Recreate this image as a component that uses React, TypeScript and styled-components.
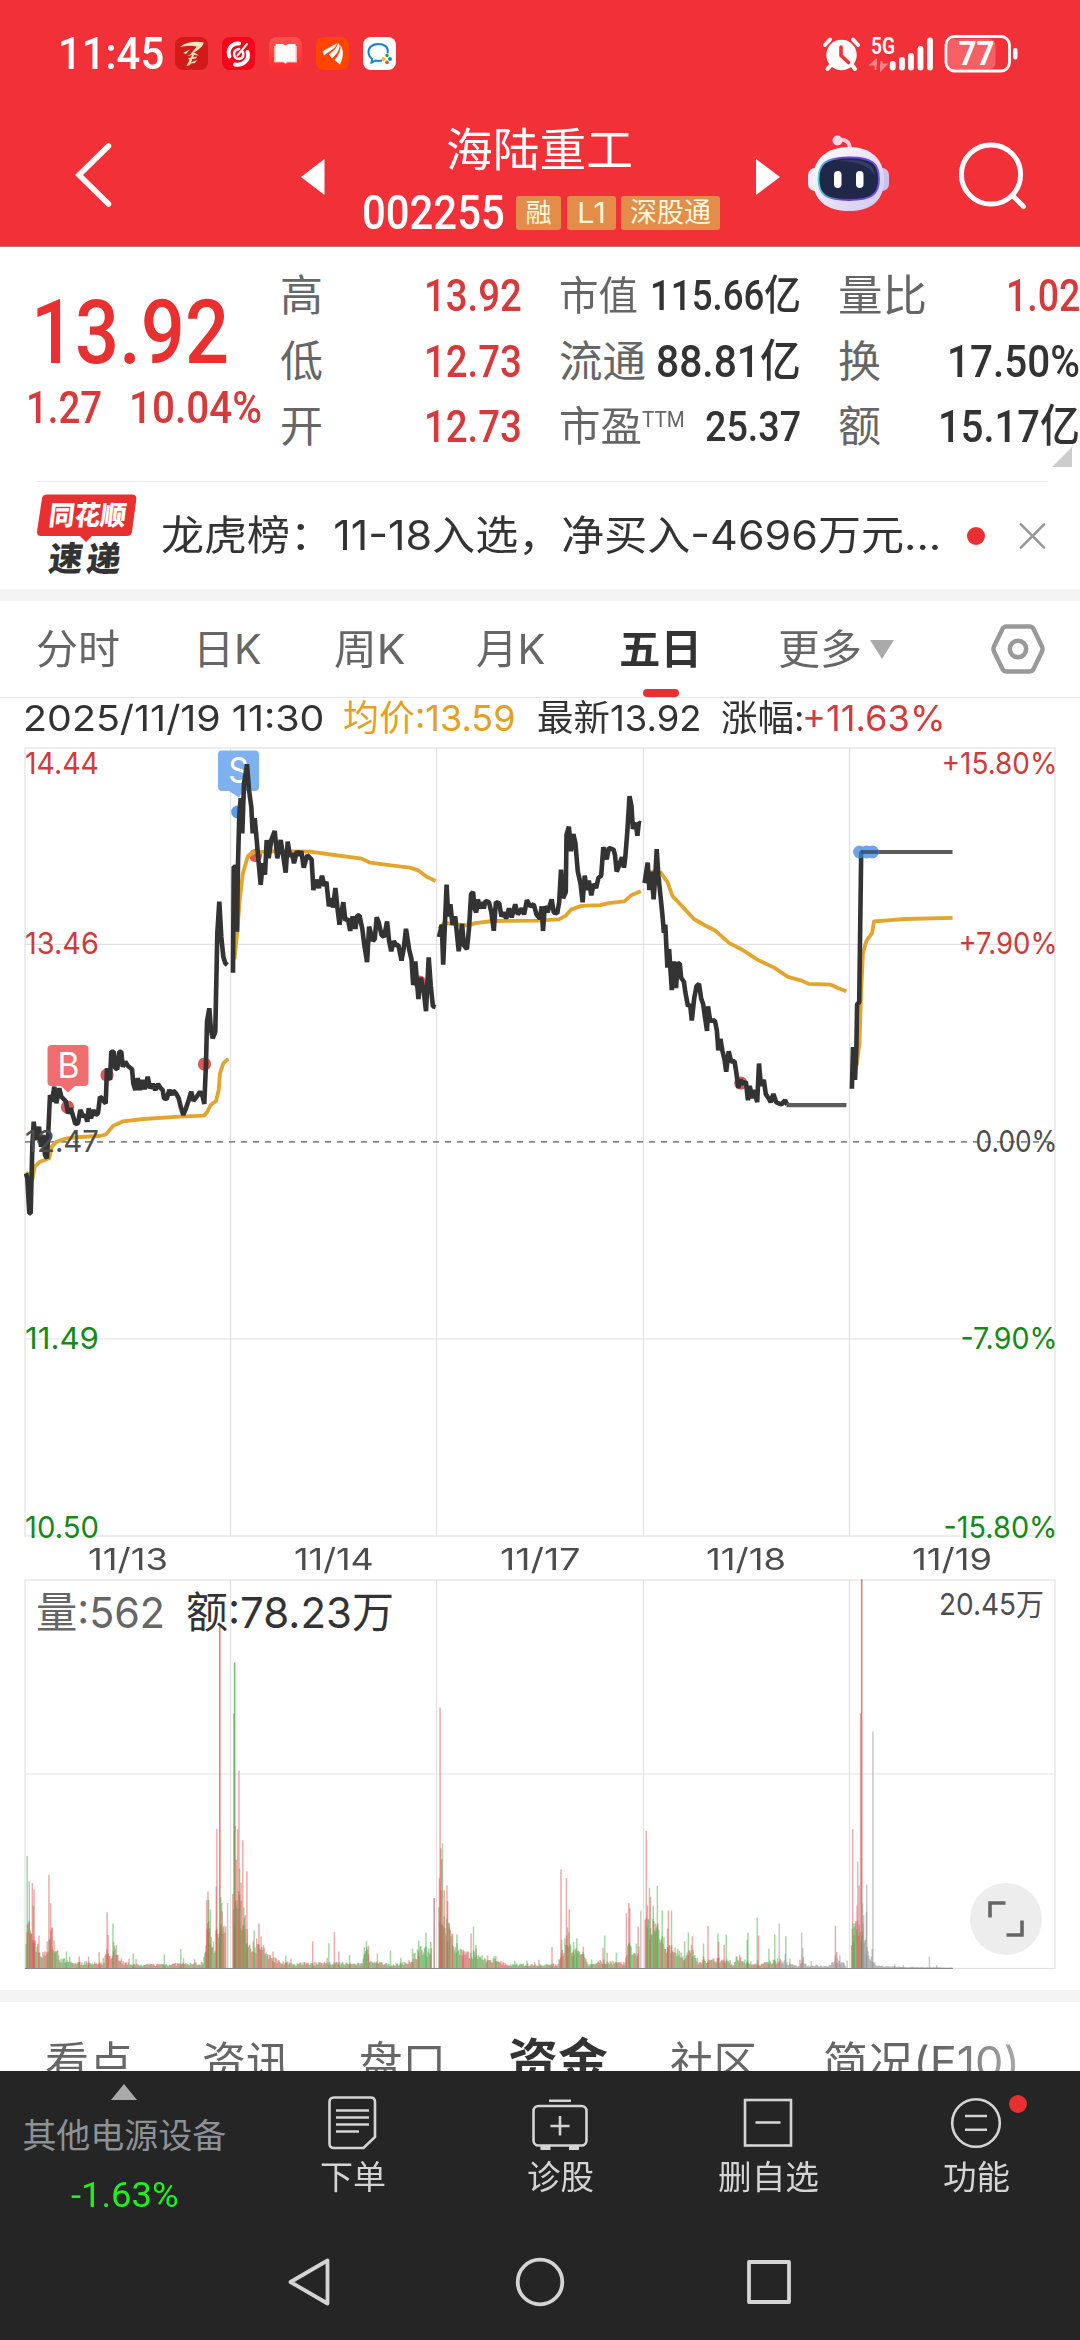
import React, { useLayoutEffect, useRef, useState } from 'react';
import styled, { createGlobalStyle, css } from 'styled-components';

const DIN = "Roboto, 'Noto Sans CJK SC', sans-serif";
const SANS = "Inter, 'Noto Sans CJK SC', sans-serif";

const Global = createGlobalStyle`
  * { box-sizing: border-box; }
  body { margin: 0; background: #fff; font-family: ${SANS}; }
  svg { display: block; flex: none; overflow: visible; }
`;

/* ---------- text squeezed to a column width ---------- */

const FitBox = styled.span<{ $w: number; $h: number; $ml: number }>`
  display: block;
  flex: none;
  width: ${(p) => p.$w}px;
  height: ${(p) => p.$h}px;
  line-height: ${(p) => p.$h}px;
  margin-left: ${(p) => p.$ml}px;
`;
const FitInner = styled.span<{ $size: number; $color: string; $weight: number; $font: string }>`
  display: inline-block;
  vertical-align: top;
  white-space: pre;
  transform-origin: 0 50%;
  font-family: ${(p) => p.$font};
  font-size: ${(p) => p.$size}px;
  font-weight: ${(p) => p.$weight};
  color: ${(p) => p.$color};
`;

type FitProps = {
  w: number;
  size: number;
  children: React.ReactNode;
  h?: number;
  ml?: number;
  color?: string;
  weight?: number;
  font?: string;
};

function Fit({ w, size, children, h = size, ml = 0, color = '#333', weight = 400, font = SANS }: FitProps) {
  const ref = useRef<HTMLSpanElement>(null);
  const [scale, setScale] = useState(1);
  useLayoutEffect(() => {
    if (ref.current) setScale(w / ref.current.offsetWidth);
  }, [w, size]);
  return (
    <FitBox $w={w} $h={h} $ml={ml}>
      <FitInner ref={ref} $size={size} $color={color} $weight={weight} $font={font} style={{ transform: `scaleX(${scale})` }}>
        {children}
      </FitInner>
    </FitBox>
  );
}

/* ---------- header ---------- */

const Screen = styled.div`
  width: 1080px;
  height: 2340px;
  overflow: hidden;
  display: flex;
  flex-direction: column;
  background: #fff;
`;
const Header = styled.header`
  height: 246px;
  flex: none;
  background: #f23038;
  box-shadow: 0 1px 0 #b9777c;
`;
const StatusBar = styled.div`
  height: 107px;
  display: flex;
  align-items: center;
  padding: 0 62px 0 58px;
`;
const AppIcons = styled.div`
  display: flex;
  gap: 14px;
  margin-left: 11px;
  flex: 1;
`;
const TitleBar = styled.div`
  height: 139px;
  display: flex;
  align-items: center;
  padding-left: 74px;
`;
const TitleCol = styled.div`
  width: 358px;
  margin: 0 35px 0 38px;
  display: flex;
  flex-direction: column;
`;
const NameLine = styled.div`
  height: 72px;
  display: flex;
  justify-content: center;
  padding-right: 6px;
`;
const CodeLine = styled.div`
  height: 34px;
  display: flex;
  align-items: center;
`;
const Tag = styled.span<{ $w: number; $ml: number }>`
  width: ${(p) => p.$w}px;
  margin-left: ${(p) => p.$ml}px;
  height: 34px;
  border-radius: 3px;
  background: #e48d4b;
  display: flex;
  align-items: center;
  justify-content: center;
`;

function StatusIcons() {
  return (
    <AppIcons>
      <svg width="33" height="33" viewBox="0 0 33 33">
        <rect width="33" height="33" rx="8" fill="#d21a18" />
        <path d="M5 10C11 5 20 4 28.500 5.500C29 8 26 11 19 15.500L15 18C18 14 21 11 21.500 9.500C16 8 10 9 5 10Z" fill="#fbe6bd" />
        <path d="M8 16L15 12.500L11 17ZM12 19L19 15.500L24 18.500L18 17.800ZM13 21L22 19.500L21 21.500L14 22.500ZM17 18L19 18L15 28L11.500 29ZM12 27L22 23L20 26Z" fill="#fbe6bd" />
      </svg>
      <svg width="33" height="33" viewBox="0 0 33 33">
        <rect width="33" height="33" rx="8" fill="#f40519" />
        <g fill="none" stroke="#fff" strokeLinecap="round">
          <path d="M17 6.500C9 6 5 13 7.500 19.500" strokeWidth="4" />
          <path d="M13 27.500C21 29 28 23 25.500 15" strokeWidth="4" />
          <path d="M17 12C10 13 11 22 17 22C22 21 22 17 20.500 14.500" strokeWidth="2.600" />
          <path d="M25 7L15.500 18.500" strokeWidth="2" />
        </g>
      </svg>
      <svg width="33" height="33" viewBox="0 0 33 33">
        <defs>
          <linearGradient id="book" x1="0" y1="0" x2="0" y2="1">
            <stop offset="0" stopColor="#ff5450" />
            <stop offset="1" stopColor="#fe2a2f" />
          </linearGradient>
        </defs>
        <rect width="33" height="33" rx="8" fill="url(#book)" />
        <path d="M5 9H28V25.500H18.500L16.500 27L14.500 25.500H5Z" fill="#ffb4b1" />
        <path d="M6.500 7H13.500L16.500 8.500L19.500 7H26.500V24.500H18.500L16.500 26L14.500 24.500H6.500Z" fill="#fffafa" />
      </svg>
      <svg width="33" height="33" viewBox="0 0 33 33">
        <rect width="33" height="33" rx="8" fill="#ff4500" />
        <path d="M6.500 14.500C12 11 17 9 21 6L20 9C17 13 12 15 8 18.500Z" fill="#fff" />
        <path d="M13 17.500C18 14 21 10.500 22 6L23.500 8C24 13 20 18 16 21.500Z" fill="#fff" />
        <path d="M18.500 23C23 18 25 13 24.500 8C28 14 27.500 20 24 27.500Z" fill="#fff" />
      </svg>
      <svg width="33" height="33" viewBox="0 0 33 33">
        <rect width="33" height="33" rx="8" fill="#fff" />
        <path d="M24.500 16.500C26 9.500 21 7 15 7C8.500 7 5 11.500 5.500 16C6 19 7 20.500 9 22L8.500 25.500L12.500 23.500C15 24.200 17 24 19 23.500" fill="none" stroke="#1a7fdc" strokeWidth="2" />
        <circle cx="24" cy="18.500" r="1.800" fill="#3fa72f" />
        <circle cx="20.500" cy="22" r="2" fill="#e3c33a" />
        <circle cx="27" cy="22" r="2" fill="#1f84dd" />
        <circle cx="24" cy="25.300" r="1.900" fill="#e0602b" />
      </svg>
    </AppIcons>
  );
}

function SystemIcons() {
  return (
    <>
      <svg width="37" height="36" viewBox="0 0 37 36">
        <circle cx="18.500" cy="19" r="15.200" fill="#fff" />
        <path d="M2 9L7 3.500M35 9L30 3.500" stroke="#fff" strokeWidth="4" strokeLinecap="round" />
        <path d="M8 29L4.500 33M29 29L32 33" stroke="#fff" strokeWidth="4" strokeLinecap="round" />
        <path d="M18 11V19.500L25.500 26.500" fill="none" stroke="#f23038" strokeWidth="3.600" strokeLinecap="round" />
      </svg>
      <svg width="84" height="36" viewBox="860 36 84 36">
        <text x="871" y="53.500" fontFamily="Roboto, sans-serif" fontWeight="600" fontSize="23" fill="#fff" textLength="24" lengthAdjust="spacingAndGlyphs">5G</text>
        <path d="M875.500 70V63M871 64.500L876 60V64.500ZM881.500 61V70M886 64.500L881 70V65Z" stroke="#ff8187" strokeWidth="2" fill="#ff8187" />
        <path d="M892.700 64V67.500M902 60V67.500M911 56V67.500M920.500 49V67.500M930 40.500V67.500" stroke="#fff" strokeWidth="5.800" strokeLinecap="round" />
      </svg>
      <svg width="74" height="38" viewBox="944.500 35 74 38">
        <rect x="948" y="39" width="48" height="30" rx="6" fill="#f65f64" />
        <rect x="946.500" y="36.500" width="63.500" height="34.500" rx="8.500" fill="none" stroke="#fff" strokeWidth="2.800" />
        <rect x="1013.500" y="48" width="4.500" height="11.500" rx="2" fill="#fff" />
        <text x="959" y="65" fontFamily="Roboto, sans-serif" fontWeight="700" fontSize="33" fill="#fff" textLength="36" lengthAdjust="spacingAndGlyphs">77</text>
      </svg>
    </>
  );
}

const Robot = styled.svg`
  margin-left: 27px;
`;
const Search = styled.svg`
  margin-left: 67px;
`;
const PrevArrow = styled.svg`
  margin-left: 187px;
`;

function TopHeader() {
  return (
    <Header>
      <StatusBar>
        <Fit w={106} size={45} weight={500} font={DIN} color="#fff">11:45</Fit>
        <StatusIcons />
        <SystemIcons />
      </StatusBar>
      <TitleBar>
        <svg width="40" height="68" viewBox="74 143 40 68">
          <path d="M108.500 146L79 175L108.500 204" fill="none" stroke="#fff" strokeWidth="5.500" strokeLinecap="round" />
        </svg>
        <PrevArrow width="24" height="36" viewBox="0 0 24 36">
          <path d="M0 18L23.500 0V36Z" fill="#fff" />
        </PrevArrow>
        <TitleCol>
          <NameLine>
            <Fit w={187} h={51} size={46} color="#fff">海陆重工</Fit>
          </NameLine>
          <CodeLine>
            <Fit w={143} size={48} weight={500} font={DIN} color="#fff" ml={-1}>002255</Fit>
            <Tag $w={45} $ml={11}><Fit w={26} size={26} color="#fff8dc">融</Fit></Tag>
            <Tag $w={49} $ml={6}><Fit w={29} size={28} color="#fff8dc">L1</Fit></Tag>
            <Tag $w={99} $ml={5}><Fit w={81} size={27} color="#fff8dc">深股通</Fit></Tag>
          </CodeLine>
        </TitleCol>
        <svg width="24" height="36" viewBox="0 0 24 36">
          <path d="M24 18L0 0V36Z" fill="#fff" />
        </svg>
        <Robot width="83" height="78" viewBox="806 137 83 78">
          <defs>
            <linearGradient id="shell" x1="0" y1="0" x2="1" y2="1">
              <stop offset="0" stopColor="#fff" />
              <stop offset="0.500" stopColor="#eae3f8" />
              <stop offset="1" stopColor="#c9c8f0" />
            </linearGradient>
            <linearGradient id="rim" x1="0" y1="0" x2="1" y2="0">
              <stop offset="0" stopColor="#4fd0dc" />
              <stop offset="0.400" stopColor="#6a37cf" />
              <stop offset="1" stopColor="#6b50ea" />
            </linearGradient>
          </defs>
          <path d="M837 139C845 138 849 141 849 149" fill="none" stroke="#f6c9d8" strokeWidth="4" />
          <circle cx="836.500" cy="139.500" r="5" fill="#f9d9e5" />
          <rect x="807" y="167" width="14" height="23" rx="7" fill="#f3ecfa" />
          <rect x="874" y="167" width="14" height="23" rx="7" fill="#cdbff0" />
          <path d="M848 146C870 146 882 158 883 176C884 200 870 210 848 210C826 210 811 200 812 176C813 158 826 146 848 146Z" fill="url(#shell)" />
          <path d="M847 156.500C872 156 878 163 878 178C878 194 870 199 848 199C825 199 817.500 194 817.500 178C817.500 163 824 157 847 156.500Z" fill="#20284a" stroke="url(#rim)" strokeWidth="1.800" />
          <path d="M838 160C857 157 873 160 874 174C866 163 856 161 838 160Z" fill="#343d62" />
          <rect x="833" y="170" width="7.500" height="17" rx="3.700" fill="#fff" />
          <rect x="855" y="170" width="7.500" height="17" rx="3.700" fill="#fff" />
        </Robot>
        <Search width="70" height="70" viewBox="956 142 70 70">
          <circle cx="990" cy="174.500" r="29.600" fill="none" stroke="#fff" strokeWidth="5" />
          <path d="M1011.500 195.500L1022.500 206.500" stroke="#fff" strokeWidth="5" strokeLinecap="round" />
        </Search>
      </TitleBar>
    </Header>
  );
}

/* ---------- quote ---------- */

const RED = '#d63a3a';
const GREY = '#666';

const Quote = styled.section`
  position: relative;
  height: 235px;
  flex: none;
  display: flex;
  padding-top: 17px;
`;
const PriceCol = styled.div`
  width: 280px;
  padding-top: 24px;
`;
const Row = styled.div<{ $pl?: number }>`
  display: flex;
  align-items: center;
  padding-left: ${(p) => p.$pl ?? 0}px;
`;
const Metrics = styled.div<{ $ml: number }>`
  width: 242px;
  margin-left: ${(p) => p.$ml}px;
  flex: none;
`;
const Metric = styled.div`
  height: 65.5px;
  display: flex;
  align-items: center;
  justify-content: space-between;
`;
const Label = styled.div`
  display: flex;
  align-items: center;
`;
const Superscript = styled.div`
  padding-bottom: 14px;
`;
const Corner = styled.i`
  position: absolute;
  right: 8px;
  bottom: 14px;
  border: 10px solid transparent;
  border-right-color: #ccc;
  border-bottom-color: #ccc;
`;

type M = { l: string; lw: number; ls: number; v: string; vw: number; vs?: number; c?: string; sup?: boolean };
const COLS: { ml: number; rows: M[] }[] = [
  {
    ml: 0,
    rows: [
      { l: '高', lw: 43, ls: 43, v: '13.92', vw: 98, c: RED },
      { l: '低', lw: 43, ls: 43, v: '12.73', vw: 98, c: RED },
      { l: '开', lw: 43, ls: 43, v: '12.73', vw: 98, c: RED },
    ],
  },
  {
    ml: 37,
    rows: [
      { l: '市值', lw: 79, ls: 40, v: '115.66亿', vw: 151, vs: 42 },
      { l: '流通', lw: 87, ls: 43.5, v: '88.81亿', vw: 145 },
      { l: '市盈', lw: 83, ls: 41, v: '25.37', vw: 96, vs: 42, sup: true },
    ],
  },
  {
    ml: 37,
    rows: [
      { l: '量比', lw: 89, ls: 43.5, v: '1.02', vw: 74, c: RED },
      { l: '换', lw: 43, ls: 43, v: '17.50%', vw: 133 },
      { l: '额', lw: 43, ls: 43, v: '15.17亿', vw: 142 },
    ],
  },
];

function QuotePanel() {
  return (
    <Quote>
      <PriceCol>
        <Row $pl={31}><Fit w={198} h={92} size={89} weight={500} font={DIN} color="#e83030">13.92</Fit></Row>
        <Row $pl={26}>
          <Fit w={76} h={57} size={45} weight={500} font={DIN} color={RED}>1.27</Fit>
          <Fit w={133} h={57} size={45} weight={500} font={DIN} color={RED} ml={27}>10.04%</Fit>
        </Row>
      </PriceCol>
      {COLS.map((c, i) => (
        <Metrics key={i} $ml={c.ml}>
          {c.rows.map((m) => (
            <Metric key={m.l}>
              <Label>
                <Fit w={m.lw} size={m.ls} color={GREY}>{m.l}</Fit>
                {m.sup && <Superscript><Fit w={43} size={22} color={GREY} font={DIN}>TTM</Fit></Superscript>}
              </Label>
              <Fit w={m.vw} size={m.vs ?? 45} weight={500} font={DIN} color={m.c ?? '#333'}>{m.v}</Fit>
            </Metric>
          ))}
        </Metrics>
      ))}
      <Corner />
    </Quote>
  );
}

/* ---------- news strip ---------- */

const News = styled.section`
  height: 108px;
  flex: none;
  margin: 0 33px 0 36px;
  border-top: 1px solid #ebebeb;
  display: flex;
  align-items: center;
`;
const Dot = styled.i<{ $ml: number }>`
  width: 18px;
  height: 18px;
  flex: none;
  margin-left: ${(p) => p.$ml}px;
  border-radius: 50%;
  background: #e83030;
`;
const CloseIcon = styled.svg`
  margin-left: 33px;
`;
const Band = styled.div`
  height: 12px;
  flex: none;
  background: #f4f4f4;
`;

function NewsStrip() {
  return (
    <News>
      <svg width="100" height="82" viewBox="36 494.500 100 82">
        <path d="M47 494H132Q137 494 136.300 499L132 531Q131.500 535.500 127 535.500H92L86 541.500L80 535.500H41Q36.500 535.500 37 531L42 498Q42.500 494 47 494Z" fill="#e83030" />
        <g transform="translate(0 534) skewX(-7) translate(0 -534)" fontFamily="'Noto Sans CJK SC', sans-serif" fontWeight="900">
          <text x="47" y="525" fontSize="27" fill="#fff" textLength="77" lengthAdjust="spacingAndGlyphs">同花顺</text>
          <text x="52" y="571" fontSize="34" fill="#333" textLength="72" lengthAdjust="spacing">速递</text>
        </g>
      </svg>
      <Fit w={780} h={50} size={40.5} ml={25}>龙虎榜：11-18入选，净买入-4696万元...</Fit>
      <Dot $ml={26} />
      <CloseIcon width="29" height="30" viewBox="0 0 30 30">
        <path d="M3 3L27 27M27 3L3 27" stroke="#999" strokeWidth="2.800" strokeLinecap="round" />
      </CloseIcon>
    </News>
  );
}

/* ---------- period tabs ---------- */

const Tabs = styled.nav`
  height: 97px;
  flex: none;
  display: flex;
  align-items: center;
  padding-left: 36px;
  border-bottom: 1px solid #e6e6e6;
`;
const Active = styled.div`
  position: relative;
  margin-left: 73px;
  &::after {
    content: '';
    position: absolute;
    left: 24px;
    bottom: -27px;
    width: 36px;
    height: 8px;
    border-radius: 4px;
    background: #e83030;
  }
`;
const More = styled.i`
  margin-left: 8px;
  border: 12.5px solid transparent;
  border-top: 19px solid #aaa;
  border-bottom: 0;
`;
const Gear = styled.svg`
  margin-left: 95px;
`;

function PeriodTabs() {
  return (
    <Tabs>
      <Fit w={84} size={41} color={GREY}>分时</Fit>
      <Fit w={69} size={41} color={GREY} ml={73}>日K</Fit>
      <Fit w={72} size={41} color={GREY} ml={72}>周K</Fit>
      <Fit w={70} size={41} color={GREY} ml={70}>月K</Fit>
      <Active><Fit w={83} size={41} weight={700}>五日</Fit></Active>
      <Fit w={84} size={41} color={GREY} ml={76}>更多</Fit>
      <More />
      <Gear width="58" height="52" viewBox="988 623 58 52">
        <path d="M1005.500 626.500H1028.500Q1031 626.500 1032.300 628.500L1041 646.500Q1042 649 1041 651.500L1032.300 669.500Q1031 671.500 1028.500 671.500H1005.500Q1003 671.500 1001.700 669.500L993 651.500Q992 649 993 646.500L1001.700 628.500Q1003 626.500 1005.500 626.500Z" fill="none" stroke="#999" strokeWidth="4.500" />
        <circle cx="1017" cy="649" r="8.200" fill="none" stroke="#999" strokeWidth="4.500" />
      </Gear>
    </Tabs>
  );
}

const InfoRow = styled.div`
  height: 49px;
  flex: none;
  display: flex;
  padding: 1px 0 0 23px;
`;

/* ---------- charts ---------- */

// Series are recorded on a fine grid: 2.904 units per pixel across,
// 2.450 (price) and 2.613 (volume) units per pixel down.
const KX = 2.904;
const RIGHT = 1568;
const toPrice = (s: string, off = 0) =>
  s.trim().split(/\s+/).map((p) => {
    const [x, y] = p.split(',').map(Number);
    return `${((x + off) / KX).toFixed(1)},${(590 + y / 2.45).toFixed(1)}`;
  }).join(' ');
// The opening day and a half is recorded at 3 units per pixel.
const toFine = (s: string) =>
  s.trim().split(/\s+/).map((p) => {
    const [x, y] = p.split(',').map(Number);
    return `${(x / 3).toFixed(1)},${(730 + y / 3).toFixed(1)}`;
  }).join(' ');

const PRICE = [
  toFine(`78,1330 82,1345 88,1450 92,1450 97,1250 101,1175 107,1230 112,1210 117,1190 123,1250 130,1215 135,1275 141,1285 146,1180 150,1095 156,1115 163,1070 169,1120 178,1075 184,1100 192,1108 198,1115 204,1150 212,1135 220,1160 226,1182 234,1180 241,1140 250,1160 256,1155 262,1175 266,1135 273,1165 280,1140 287,1155 294,1150 300,1100 306,1105 312,1115 317,1120 321,1015 330,1050 334,965 341,965 346,1015 352,1018 358,965 364,965 368,1010 376,995 384,1008 396,1018 400,1060 406,1080 413,1045 420,1080 427,1050 434,1078 443,1040 450,1075 458,1062 466,1080 474,1062 482,1075 488,1080 492,1105 500,1107 508,1080 516,1095 520,1082 528,1090 536,1105 542,1130 550,1155 558,1135 566,1110 574,1085 580,1112 590,1100 600,1085 608,1100 613,1122 618,1000 621,875 628,835 633,900 638,925 646,905 652,610 658,515 664,620 670,680 676,700 682,705`),
  toFine(`699,728 701,410 706,410 711,605 714,400 718,255 722,205 727,310 732,160 741,103 747,180 754,230 758,310 764,265 770,330 776,400 782,464 788,400 795,434 800,330 806,385 814,330 824,303 832,385 842,330 850,380 857,428 863,335 870,380 876,370 882,400 890,365`) + ' ' +
    toPrice(`862,640 870,650 875,640 882,680 892,650 905,660 910,735 918,710 926,730 935,700 942,725 948,715 955,775 964,755 967,778 974,730 980,780 986,820 997,765 1003,810 1010,805 1017,835 1024,800 1032,830 1038,797 1044,798 1052,830 1058,870 1066,912 1072,825 1083,860 1088,855 1094,802 1100,815 1108,845 1115,850 1124,812 1130,860 1136,885 1144,860 1150,870 1157,870 1166,908 1172,880 1179,830 1188,880 1195,905 1200,968 1206,910 1215,1002 1222,950 1230,980 1237,1032 1245,900 1251,970 1257,1020 1265,1022`),
  toPrice(`1275,850 1283,820 1287,918 1297,722 1302,800 1308,770 1314,820 1322,800 1332,885 1342,818 1347,870 1356,880 1362,830 1368,745 1374,740 1378,780 1383,790 1388,758 1392,780 1400,765 1405,780 1410,762 1420,765 1427,790 1434,835 1440,765 1450,768 1456,800 1464,790 1470,805 1478,780 1486,802 1496,770 1504,795 1515,780 1522,795 1530,760 1540,775 1550,770 1558,795 1568,805 1573,775 1577,835 1582,775 1590,790 1602,758 1608,790 1618,792 1624,765 1629,685 1635,755 1643,740 1645,600 1652,580 1658,640 1665,598 1671,620 1678,690 1686,720 1692,765 1698,700 1704,735 1710,712 1717,748 1724,720 1731,730 1738,705 1746,700 1752,630 1762,660 1768,632 1782,636 1786,650 1791,690 1798,675 1806,655 1812,680 1816,655 1822,590 1828,505 1834,530 1838,585 1846,570 1851,602 1855,570 1861,572`),
  toPrice(`304,718 309,690 313,668 318,735 324,690 330,758 335,700 339,635 344,700 350,750 355,790 360,840 364,820 370,925 375,880 383,980 390,910 395,975 400,915 406,915 410,950 418,960 422,985 430,1020 436,1015 441,1055 448,1000 455,970 462,965 468,1000 474,1015 479,1045 485,1080 488,1020 494,1055 508,1055 514,1080 518,1128 524,1100 530,1130 536,1150 541,1180 548,1130 555,1155 565,1155 570,1180 576,1220 582,1200 590,1210 598,1205 604,1250 609,1215 617,1245 622,1225 631,1255 636,1160 642,1215 650,1200 656,1235 664,1245 670,1255 678,1235 686,1255 694,1258 702,1260 712,1250 718,1261`, RIGHT),
  toPrice(`906,1222 909,1120 915,1200 919,1120 921,1015 927,1010 933,642 940,642`, RIGHT),
];
const FLAT = [toPrice('716,1262 890,1262', RIGHT), toPrice('938,642 1198,642', RIGHT)];
const AVERAGE = [
  toFine(`78,1328 90,1335 97,1350 104,1310 120,1295 148,1285 155,1250 170,1235 200,1225 240,1221 300,1218 318,1213 340,1187 370,1174 430,1167 540,1160 612,1157 622,1145 632,1125 648,1113 656,1080 660,1030 670,1000 680,990 686,988`),
  toPrice(`681,905 690,830 696,760 705,695 720,652 735,643 800,640 900,641 960,648 1050,658 1075,668 1130,674 1190,680 1215,687 1240,703 1265,713`),
  toPrice(`1275,830 1290,815 1310,818 1360,822 1380,816 1430,811 1560,810 1598,808 1623,807 1643,798 1658,783 1688,774 1743,772 1768,767 1813,763 1833,748 1861,738`),
  toPrice(`306,695 330,690 350,692 370,715 385,750 410,772 447,806 480,822 510,835 550,865 585,880 630,905 680,925 720,948 760,957 780,965 845,967 865,975 890,983`, RIGHT),
  toPrice(`920,1165 928,1110 932,1000 938,890 948,860 965,840 970,812 1000,810 1060,806 1198,803`, RIGHT),
];
const DAY_LINES = [230.5, 436.5, 643.5, 849.5];

const AXIS: [string, string, number, string, number][] = [
  ['14.44', '+15.80%', 774, '#cf3b3b', 116],
  ['13.46', '+7.90%', 954, '#cf3b3b', 99],
  ['12.47', '0.00%', 1151.5, '#4d4d4d', 82],
  ['11.49', '-7.90%', 1349, '#168a16', 97],
  ['10.50', '-15.80%', 1538, '#168a16', 114],
];

const ChartText = styled.text<{ $size: number }>`
  font-family: ${SANS};
  font-size: ${(p) => p.$size}px;
`;
const squeeze = { lengthAdjust: 'spacingAndGlyphs' as const };

function PriceChart() {
  return (
    <svg width="1080" height="790" viewBox="0 747 1080 790">
      <g stroke="#e2e2e2" strokeWidth="1.200" fill="none">
        <rect x="25" y="748" width="1030" height="788" />
        <path d="M25 944.300H1055M25 1339H1055" />
        {DAY_LINES.map((x) => <path key={x} d={`M${x} 748V1536`} />)}
      </g>
      <path d="M25 1141.800H1055" stroke="#888" strokeWidth="1.800" strokeDasharray="6 6" />
      <rect x="47.500" y="1045" width="41" height="41" rx="4" fill="#f06e70" />
      <path d="M61 1086H75L68 1092.500Z" fill="#f06e70" />
      <ChartText $size={35} x="57.500" y="1078" fill="#fff" textLength={22} {...squeeze}>B</ChartText>
      <rect x="218" y="750.500" width="41" height="40.500" rx="4" fill="#7fb1f1" />
      <path d="M229 791H243L239 797.500Z" fill="#7fb1f1" />
      <ChartText $size={35} x="228.500" y="783" fill="#fff" textLength={20} {...squeeze}>S</ChartText>
      <g fill="#e05556">
        {[[67.5, 1107], [107, 1075], [204.5, 1064], [255.5, 855.5], [419.5, 982], [740.8, 1083]].map(([x, y]) => (
          <circle key={x} cx={x} cy={y} r="6.600" />
        ))}
      </g>
      <circle cx="237.500" cy="812" r="6.400" fill="#5a9ae8" />
      <g fill="none" stroke="#e3a52b" strokeWidth="3.800" strokeLinejoin="round">
        {AVERAGE.map((p) => <polyline key={p} points={p} />)}
      </g>
      <g fill="none" stroke="#333" strokeWidth="4.600" strokeLinejoin="bevel">
        {PRICE.map((p) => <polyline key={p} points={p} />)}
        {FLAT.map((p) => <polyline key={p} points={p} stroke="#5c5c5c" strokeWidth="4.200" />)}
      </g>
      {AXIS.map(([l, r, y, c, w]) => (
        <g key={l} fill={c}>
          <ChartText $size={30} x="25" y={y} textLength={74} {...squeeze}>{l}</ChartText>
          <ChartText $size={30} x={1057.5 - w} y={y} textLength={w} {...squeeze}>{r}</ChartText>
        </g>
      ))}
      <g fill="#3f86e0" opacity="0.750">
        <circle cx="859.500" cy="852" r="6.400" />
        <circle cx="866.500" cy="852" r="6.400" />
        <circle cx="872.500" cy="852" r="6.400" />
      </g>
      <path d="M861 852H878" stroke="#333" strokeOpacity="0.450" strokeWidth="3.600" />
    </svg>
  );
}

// Background level of trading: position,height pairs for each session.
const ENVELOPES = [
  `76,130 80,170 88,110 92,90 100,100 110,65 120,45 130,45 138,75 145,95 152,110 160,65 175,32 200,20 300,16 312,60 322,45 330,80 340,45 360,18 400,13 590,17 598,70 606,170 615,70 625,80 635,160 640,190 648,150 656,120`,
  `676,190 700,200 710,140 718,100 728,85 750,75 775,50 800,30 850,14 880,18 900,16 960,18 1000,17 1050,16 1065,65 1075,22 1140,12 1190,22 1215,55 1255,66`,
  `1275,220 1290,170 1305,110 1330,60 1365,40 1380,60 1400,24 1440,28 1470,14 1568,12 1623,14 1633,55 1650,110 1663,55 1688,55 1708,12 1748,24 1778,20 1813,17 1823,65 1856,66`,
  `1874,150 1908,120 1928,80 1958,66 1988,36 2008,60 2023,22 2108,30 2128,12 2143,42 2158,24 2208,14 2263,28 2303,13 2318,7 2333,32 2343,9 2408,10 2428,32 2443,22 2458,8`,
  `2473,120 2490,130 2506,150 2518,55 2528,36 2538,22 2548,9 2620,6 2766,4`,
];
// Single outstanding bars; r rise, g fall, n unchanged.
const SPIKES = `79,295,g 85,228,g 94,224,r 99,207,r 97,165,r 113,87,r 142,246,r 147,172,r 152,108,r 193,45,g 230,33,r 257,32,r 288,44,r 311,148,r 314,88,r 328,118,g 338,62,g 387,40,g 477,38,g 525,52,g 533,28,g
600,180,r 604,202,r 606,180,g 611,155,g 628,215,r 630,365,r 638,893,r 638.5,893,r 641,187,g 644,172,g 661,172,n
679,668,r 681,800,g 681.5,800,g 683,374,r 686,285,r 690,365,r 694,518,r 696,262,g 700,225,r 705,336,r 708,160,g 717,255,r 712,140,r 738,100,g 752,118,r 758,85,r 793,45,r 830,35,g 908,72,r 955,67,g 971,97,r 984,45,r 1015,36,g 1058,56,g 1064,73,g 1070,60,r 1096,40,g 1134,48,g 1164,28,g 1198,53,g 1216,73,g 1237,95,g 1251,70,g 1261,185,r 1261,185,n
1276,237,r 1278,683,r 1280,315,r 1283,287,r 1285,328,g 1290,205,r 1298,218,r 1300,177,r 1305,120,r 1314,90,r 1327,90,g 1345,50,r 1368,92,r 1375,110,g 1382,62,r 1416,35,r 1440,33,r 1530,22,g 1603,57,r 1629,260,r 1631,75,g 1645,237,r 1653,155,r 1648,108,r 1666,70,g 1675,80,g 1694,58,r 1718,24,g 1756,87,g 1751,55,r 1763,42,r 1790,42,g 1819,145,r 1826,172,r 1829,158,r 1853,110,r 1861,152,n
1877,360,r 1880,165,r 1886,212,g 1889,188,r 1897,165,g 1909,217,g 1903,118,r 1923,152,g 1941,152,r 1950,152,g 1939,105,r 1988,72,g 1999,95,g 2011,85,r 2043,66,g 2056,112,r 2085,92,g 2087,70,r 2109,90,g 2103,62,r 2172,95,g 2170,76,g 2199,134,g 2203,87,r 2233,53,g 2250,90,g 2263,118,n 2282,85,g 2294,27,n 2328,95,n 2331,54,n 2426,113,r 2430,44,r 2439,35,n 2460,22,n
2476,365,r 2478,118,g 2482,110,g 2491,280,n 2489,165,r 2495,218,r 2499,668,r 2502,1018,r 2502.5,1018,r 2505,170,n 2508,140,n 2517,220,n 2516,148,n 2535,620,n 2533,52,n 2598,12,n 2623,10,n 2699,32,n 2720,10,n`;

const TONES: Record<string, string> = { r: '#dc5050', g: '#3fae3f', n: '#8f8f8f' };

type Bar = { x: number; top: number; tone: string };

function buildVolume(): Bar[] {
  const bars: Bar[] = [];
  let seed = 7;
  const rnd = () => {
    seed = (seed * 16807) % 2147483647;
    return seed / 2147483647;
  };
  const bar = (x: number, h: number, tone: string) => {
    bars.push({ x: x / KX, top: 1968.8 - h / 2.613, tone });
  };
  ENVELOPES.forEach((env, day) => {
    const pts = env.split(' ').map((p) => p.split(',').map(Number));
    for (let i = 0; i < pts.length - 1; i++) {
      const [x0, h0] = pts[i];
      const [x1, h1] = pts[i + 1];
      for (let x = x0; x < x1; x += 2.5) {
        const base = h0 + ((h1 - h0) * (x - x0)) / (x1 - x0);
        const quiet = (day === 3 && x > 2268) || (day === 4 && x > 2505);
        const h = base * (0.5 + rnd() * 0.55) + (rnd() > 0.93 && base < 40 && day < 4 ? rnd() * 18 : 0);
        bar(x, Math.max(h, 3), quiet && rnd() > 0.08 ? 'n' : rnd() > 0.5 ? 'r' : 'g');
      }
    }
  });
  SPIKES.trim().split(/\s+/).forEach((s) => {
    const [x, h, t] = s.split(',');
    bar(Number(x), Number(h), t);
  });
  return bars.sort((a, b) => a.x - b.x);
}
const VOLUME = buildVolume();

const DateRow = styled.div`
  height: 42px;
  flex: none;
  display: flex;
  padding: 2px 25px 0;
`;
const DateCell = styled.div`
  flex: 1;
  display: flex;
  justify-content: center;
`;
const VolumeBox = styled.div`
  position: relative;
  height: 411px;
  flex: none;
`;
const Expand = styled.button`
  position: absolute;
  left: 970px;
  top: 304px;
  width: 72px;
  height: 72px;
  padding: 0;
  border: 0;
  border-radius: 50%;
  background: #ededed;
  display: grid;
  place-items: center;
`;

function VolumeChart() {
  return (
    <VolumeBox>
      <svg width="1080" height="411" viewBox="0 1579 1080 411">
        <g stroke="#e2e2e2" strokeWidth="1.200" fill="none">
          <rect x="25" y="1580" width="1030" height="388.500" />
          <path d="M25 1774H1055" />
          {DAY_LINES.map((x) => <path key={x} d={`M${x} 1580V1968`} />)}
        </g>
        <g strokeOpacity="0.480" strokeWidth="1.500">
          {VOLUME.map((b, i) => (
            <path key={i} d={`M${b.x.toFixed(2)} 1968.800V${b.top.toFixed(1)}`} stroke={TONES[b.tone]} />
          ))}
        </g>
        <path d="M25 1968.500H953" stroke="#8a8a8a" strokeWidth="1" />
        <ChartText $size={43} x="36" y="1628" fill="#666" textLength={129} {...squeeze}>量:562</ChartText>
        <ChartText $size={43} x="186" y="1628" fill="#333" textLength={208} {...squeeze}>额:78.23万</ChartText>
        <ChartText $size={30} x="939" y="1615" fill="#4d4d4d" textLength={105} {...squeeze}>20.45万</ChartText>
      </svg>
      <Expand>
        <svg width="38" height="38" viewBox="0 0 38 38">
          <path d="M3 17.500V3H18.500M35 20.500V35H19.500" fill="none" stroke="#666" strokeWidth="3.600" />
        </svg>
      </Expand>
    </VolumeBox>
  );
}

/* ---------- lower tabs and footer ---------- */

const SubTabs = styled.nav`
  height: 69px;
  flex: none;
  overflow: hidden;
  display: flex;
  padding-left: 45px;
  background: #fff;
  mask-image: linear-gradient(to right, #000 940px, rgba(0, 0, 0, 0.55) 1020px);
`;
const Footer = styled.footer`
  height: 269px;
  flex: none;
  background: #252525;
`;
const Toolbar = styled.div`
  height: 149px;
  display: flex;
`;
const Sector = styled.div`
  width: 249px;
  display: flex;
  flex-direction: column;
  align-items: center;
`;
const Up = styled.i`
  margin: 13px 0 11px;
  border: 13px solid transparent;
  border-bottom: 16px solid #aaa;
  border-top: 0;
`;
const Tool = styled.div`
  position: relative;
  width: 208px;
  padding-top: 24px;
  display: flex;
  flex-direction: column;
  align-items: center;
`;
const Badge = styled.i`
  position: absolute;
  left: 137px;
  top: 24px;
  width: 18px;
  height: 18px;
  border-radius: 50%;
  background: #e83030;
`;
const iconStroke = css`
  fill: none;
  stroke: #d4d4d4;
  stroke-width: 2.6;
`;
const ToolIcon = styled.svg.attrs({ width: 60, height: 56, viewBox: '0 0 60 56' })`
  ${iconStroke}
`;
const NavBar = styled.div`
  height: 120px;
  display: flex;
  align-items: center;
  padding: 4px 0 0 285px;
  gap: 180px;
`;
const NavIcon = styled.svg.attrs({ width: 50, height: 50, viewBox: '0 0 50 50' })`
  ${iconStroke}
  stroke-width: 3.8;
  stroke-linejoin: round;
`;

const LIGHT = '#d4d4d4';

function FooterBar() {
  return (
    <Footer>
      <Toolbar>
        <Sector>
          <Up />
          <Fit w={204} h={49} size={34} color="#8b9298">其他电源设备</Fit>
          <Fit w={108} h={72} size={35} ml={2} font={DIN} color="#1ff01f">-1.63%</Fit>
        </Sector>
        <Tool>
          <ToolIcon>
            <path d="M12 2.500H48.500Q53 2.500 53 7V42L41.500 53H12Q7.500 53 7.500 48.500V7Q7.500 2.500 12 2.500Z" transform="translate(-1 0)" />
            <path d="M13 15.500H46M13 22.500H46M13 29.500H46M13 36.500H36" />
          </ToolIcon>
          <Fit w={66} h={53} size={32.5} color={LIGHT}>下单</Fit>
        </Tool>
        <Tool>
          <ToolIcon>
            <rect x="3.500" y="11" width="53" height="39.500" rx="5" />
            <path d="M19 5.700H41M30 21V40.500M20.500 31H39.500" />
            <path d="M10.500 52.800H20.500M39 52.800H49" strokeWidth="4.500" />
          </ToolIcon>
          <Fit w={67} h={53} size={33} color={LIGHT}>诊股</Fit>
        </Tool>
        <Tool>
          <ToolIcon>
            <rect x="7" y="5" width="46" height="45.500" />
            <path d="M17.500 27.500H42.500" />
          </ToolIcon>
          <Fit w={101} h={53} size={33} color={LIGHT}>删自选</Fit>
        </Tool>
        <Tool>
          <ToolIcon>
            <circle cx="30" cy="28" r="23.800" />
            <path d="M19 21H41M19 34.800H41" />
          </ToolIcon>
          <Fit w={67} h={53} size={33} color={LIGHT}>功能</Fit>
          <Badge />
        </Tool>
      </Toolbar>
      <NavBar>
        <NavIcon><path d="M42.500 3.500V46.500L5.500 25Z" /></NavIcon>
        <NavIcon><circle cx="25" cy="25" r="22.300" /></NavIcon>
        <NavIcon><rect x="4" y="5" width="40" height="40" /></NavIcon>
      </NavBar>
    </Footer>
  );
}

export default function App() {
  return (
    <Screen>
      <Global />
      <TopHeader />
      <QuotePanel />
      <NewsStrip />
      <Band />
      <PeriodTabs />
      <InfoRow>
        <Fit w={301} h={39} size={36}>2025/11/19 11:30</Fit>
        <Fit w={173} h={39} size={36} color="#e3a11f" ml={19}>均价:13.59</Fit>
        <Fit w={164} h={39} size={36} ml={21}>最新13.92</Fit>
        <Fit w={83} h={39} size={36} ml={20}>涨幅:</Fit>
        <Fit w={143} h={39} size={36} color="#d63a3a" ml={-2}>+11.63%</Fit>
      </InfoRow>
      <PriceChart />
      <DateRow>
        {['11/13', '11/14', '11/17', '11/18', '11/19'].map((d) => (
          <DateCell key={d}><Fit w={80} h={40} size={30} color="#4d4d4d">{d}</Fit></DateCell>
        ))}
      </DateRow>
      <VolumeChart />
      <Band />
      <SubTabs>
        <Fit w={88} h={120} size={43.5} color={GREY}>看点</Fit>
        <Fit w={88} h={120} size={43.5} color={GREY} ml={69}>资讯</Fit>
        <Fit w={87} h={120} size={43.5} color={GREY} ml={69}>盘口</Fit>
        <Fit w={100} h={120} size={49} weight={700} ml={62}>资金</Fit>
        <Fit w={87} h={120} size={43.5} color={GREY} ml={62}>社区</Fit>
        <Fit w={197} h={120} size={43.5} color={GREY} ml={66}>简况(E10)</Fit>
      </SubTabs>
      <FooterBar />
    </Screen>
  );
}
